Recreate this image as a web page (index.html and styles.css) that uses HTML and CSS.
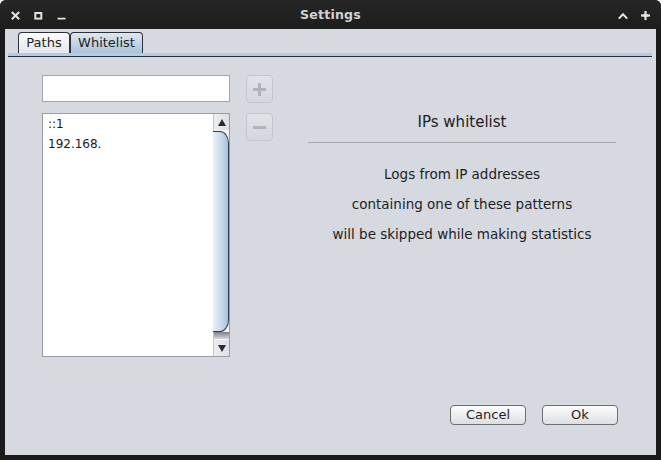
FILE: index.html
```html
<!DOCTYPE html>
<html>
<head>
<meta charset="utf-8">
<link rel="stylesheet" href="styles.css">
</head>
<body>
<div class="window">
  <div class="titlebar">
    <div class="tb-left">
      <svg class="ico" width="9" height="9" viewBox="0 0 9 9"><path d="M0.8 1 L8.2 8.2 M8.2 1 L0.8 8.2" stroke="#e2e2e2" stroke-width="2" fill="none"/></svg>
      <svg class="ico" width="9" height="9" viewBox="0 0 9 9"><rect x="1.3" y="2" width="6" height="5.6" stroke="#e2e2e2" stroke-width="2" fill="none"/></svg>
      <svg class="ico" width="9" height="9" viewBox="0 0 9 9"><rect x="0.5" y="6.7" width="8" height="1.8" fill="#e2e2e2"/></svg>
    </div>
    <div class="title">Settings</div>
    <div class="tb-right">
      <svg class="ico caret" width="10" height="9" viewBox="0 0 10 9"><path d="M0.8 7.6 L5 3.2 L9.2 7.6" stroke="#e2e2e2" stroke-width="2" fill="none"/></svg>
      <svg class="ico" width="9" height="9" viewBox="0 0 9 9"><polygon points="3.4,0 5.6,0 5.6,3 9,3.6 9,5.4 5.6,6 5.6,9 3.4,9 3.4,6 0,5.4 0,3.6 3.4,3" fill="#e2e2e2"/></svg>
    </div>
  </div>
  <div class="panel">
    <div class="tabs">
      <div class="tab tab-paths">Paths</div>
      <div class="tab tab-active">Whitelist</div>
    </div>
    <div class="tabline"></div>
    <div class="body">
      <div class="main">
        <div class="left">
          <div class="field"></div>
          <div class="list">
            <div class="items">
              <div class="item">::1</div>
              <div class="item">192.168.</div>
            </div>
            <div class="scrollbar">
              <div class="sb-btn"><span class="arrow-up"></span></div>
              <div class="sb-track">
                <div class="thumb"></div>
                <div class="thumb-shadow"></div>
              </div>
              <div class="sb-btn"><span class="arrow-down"></span></div>
            </div>
          </div>
        </div>
        <div class="tools">
          <div class="tool"><svg width="15" height="15" viewBox="0 0 15 15"><path d="M7.5 1 V14 M1 7.5 H14" stroke="#b0b3b9" stroke-width="3"/></svg></div>
          <div class="tool"><svg width="15" height="15" viewBox="0 0 15 15"><path d="M1 7.5 H14" stroke="#b0b3b9" stroke-width="3"/></svg></div>
        </div>
        <div class="info">
          <div class="info-title">IPs whitelist</div>
          <div class="sep"></div>
          <div class="info-text">
            <div>Logs from IP addresses</div>
            <div>containing one of these patterns</div>
            <div>will be skipped while making statistics</div>
          </div>
        </div>
      </div>
      <div class="actions">
        <div class="btn">Cancel</div>
        <div class="btn">Ok</div>
      </div>
    </div>
  </div>
</div>
</body>
</html>
```

FILE: styles.css
```css
html, body {
  margin: 0;
  padding: 0;
  background: #ffffff;
}

body {
  font-family: "DejaVu Sans", "Liberation Sans", sans-serif;
  color: #1e1e1e;
}

.window {
  width: 661px;
  height: 460px;
  background: #1b1b1b;
  border-radius: 6px 6px 0 0;
  display: flex;
  flex-direction: column;
  overflow: hidden;
}

.titlebar {
  height: 29px;
  display: grid;
  grid-template-columns: 1fr auto 1fr;
  background: linear-gradient(#262626, #1d1d1d);
}

.tb-left {
  display: flex;
  gap: 14px;
  padding-left: 11px;
  align-items: flex-start;
}

.tb-right {
  display: flex;
  gap: 13px;
  padding-right: 11px;
  justify-content: flex-end;
  align-items: flex-start;
}

.ico {
  margin-top: 11px;
  display: block;
}

.caret {
  margin-top: 11px;
}

.title {
  color: #d2d2d2;
  font-weight: bold;
  font-size: 12.6px;
  line-height: 30px;
  letter-spacing: 0.2px;
}

.panel {
  margin: 0 5px 5px 5px;
  height: 426px;
  background: #d6d9e0;
  display: flex;
  flex-direction: column;
}

.tabs {
  display: flex;
  padding: 3px 0 0 13px;
  height: 21px;
}

.tab {
  box-sizing: border-box;
  height: 21px;
  border: 1px solid #2a323c;
  border-bottom: none;
  border-radius: 4px 4px 0 0;
  font-size: 13px;
  line-height: 20px;
  text-align: center;
  color: #1e1e1e;
}

.tab-paths {
  width: 52px;
  background: linear-gradient(#fbfcfd, #e4e7eb);
}

.tab-active {
  width: 73px;
  background: linear-gradient(#dde7f1, #aac2da);
}

.tabline {
  margin: 0 4px 0 3px;
  height: 0;
  border-top: 3px solid #b7cade;
  border-bottom: 1px solid #223044;
}

.body {
  flex: 1;
  padding: 18px 38px 30px 37px;
  display: flex;
  flex-direction: column;
}

.main {
  display: flex;
  height: 282px;
}

.left {
  width: 188px;
  display: flex;
  flex-direction: column;
  gap: 11px;
}

.field {
  box-sizing: border-box;
  height: 27px;
  background: #ffffff;
  border: 1px solid #a3a6ad;
}

.list {
  box-sizing: border-box;
  height: 244px;
  background: #ffffff;
  border: 1px solid #9a9ca5;
  display: flex;
}

.items {
  flex: 1;
  padding: 0 0 0 5px;
  font-size: 12px;
  line-height: 20px;
  color: #1a1a1a;
}

.scrollbar {
  width: 15px;
  display: flex;
  flex-direction: column;
  border-left: 1px solid #c4c7cd;
  background: #f4f5f7;
}

.sb-btn {
  height: 16px;
  background: linear-gradient(90deg, #eceef1, #dcdfe3);
  display: flex;
  align-items: center;
  justify-content: center;
}

.arrow-up {
  width: 0;
  height: 0;
  border-left: 4px solid transparent;
  border-right: 4px solid transparent;
  border-bottom: 7px solid #2a2a2a;
}

.arrow-down {
  width: 0;
  height: 0;
  border-left: 4px solid transparent;
  border-right: 4px solid transparent;
  border-top: 7px solid #2a2a2a;
}

.sb-track {
  flex: 1;
  display: flex;
  flex-direction: column;
  padding-top: 1px;
}

.thumb {
  box-sizing: border-box;
  height: 201px;
  margin-left: -1px;
  border: 1px solid #2e3d4f;
  border-radius: 0 9px 9px 0 / 0 12px 12px 0;
  border-left: none;
  background: linear-gradient(90deg, #eaf1f8, #c5d8ea 60%, #a9c1d9);
}

.thumb-shadow {
  height: 7px;
  background: linear-gradient(#7b7f86, #d7d9dd);
}

.tools {
  width: 27px;
  margin-left: 16px;
  display: flex;
  flex-direction: column;
  gap: 10px;
}

.tool {
  box-sizing: border-box;
  width: 27px;
  height: 28px;
  border: 1px solid #c2c5cb;
  border-radius: 4px;
  background: linear-gradient(#dfe2e7, #d4d7dd);
  display: flex;
  align-items: center;
  justify-content: center;
}

.info {
  width: 308px;
  margin-left: 35px;
  padding-top: 38px;
  text-align: center;
}

.info-title {
  font-size: 15px;
  line-height: 18px;
  color: #1e1e1e;
}

.sep {
  margin-top: 11px;
  height: 1px;
  background: #a2a5ad;
}

.info-text {
  margin-top: 16px;
  font-size: 13.5px;
  line-height: 30px;
  color: #1e1e1e;
}

.actions {
  margin-top: auto;
  display: flex;
  justify-content: flex-end;
  gap: 16px;
}

.btn {
  box-sizing: border-box;
  width: 76px;
  height: 20px;
  border: 1px solid #6d6e72;
  border-radius: 4px;
  background: linear-gradient(#fdfdfd, #dddee2);
  font-size: 13px;
  line-height: 18px;
  text-align: center;
  color: #1e1e1e;
}
```
